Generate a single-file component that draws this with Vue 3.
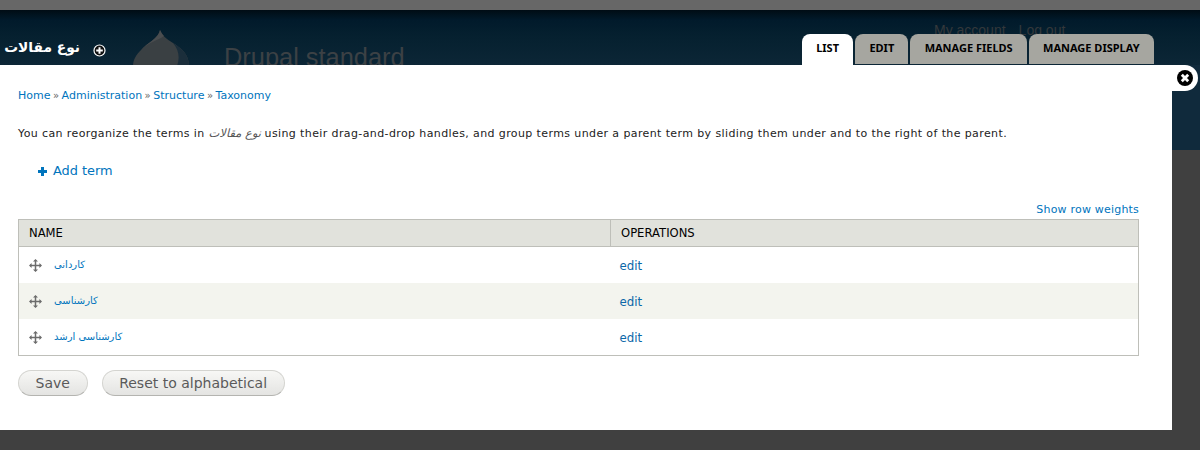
<template>
  <div class="page">
    <div class="top-strip"></div>

    <header class="head">
      <h1 class="title" dir="rtl">نوع مقالات</h1>
      <svg class="shortcut" width="13" height="13" viewBox="0 0 13 13">
        <circle cx="6.5" cy="6.5" r="5.5" fill="#111" stroke="#fff" stroke-width="1.2" />
        <path d="M6.5 3.2v6.6M3.2 6.5h6.6" stroke="#fff" stroke-width="2" />
      </svg>
      <svg class="drop" width="58" height="36" viewBox="0 0 58 36">
        <path d="M27 0C26 8 14 13 8 20C3 25 0 30 0 36H56C56 24 48 18 40 13C34 9 29 6 27 0Z" fill="#3a4043" />
        <path d="M27 0C26 8 14 13 8 20C16 12 26 10 31 6C29 4 28 2 27 0Z" fill="#4a4d4f" />
        <path d="M40 13C48 18 56 24 56 36H44C47 28 46 20 40 13Z" fill="#1b2e3b" />
      </svg>
      <span class="site-name">Drupal standard</span>
      <nav class="account">
        <span>My account</span>
        <span>Log out</span>
      </nav>
      <ul class="tabs">
        <li v-for="tab in tabs" :key="tab" class="tab" :class="{ active: tab === 'LIST' }">{{ tab }}</li>
      </ul>
    </header>

    <div class="overlay-row">
      <main class="sheet">
        <div class="breadcrumb">
          <template v-for="(crumb, i) in crumbs" :key="crumb">
            <a>{{ crumb }}</a><span v-if="i < crumbs.length - 1" class="sep">»</span>
          </template>
        </div>

        <p class="help">
          You can reorganize the terms in <em>نوع مقالات</em> using their drag-and-drop handles, and group terms under a parent term by sliding them under and to the right of the parent.
        </p>

        <div class="add-term">
          <svg width="9" height="9" viewBox="0 0 9 9">
            <path d="M4.5 0v9M0 4.5h9" stroke="#0074bd" stroke-width="3" />
          </svg>
          <a>Add term</a>
        </div>

        <div class="weights"><a>Show row weights</a></div>

        <table class="terms">
          <thead>
            <tr>
              <th class="col-name">NAME</th>
              <th>OPERATIONS</th>
            </tr>
          </thead>
          <tbody>
            <tr v-for="term in terms" :key="term">
              <td class="col-name">
                <div class="term-cell">
                  <svg class="handle" width="13" height="13" viewBox="0 0 13 13">
                    <path d="M6.5 1v11M1 6.5h11" stroke="#6c6c6c" stroke-width="1.5" />
                    <path d="M6.5 0L9 2.6H4ZM6.5 13L9 10.4H4ZM0 6.5L2.6 4V9ZM13 6.5L10.4 4V9Z" fill="#6c6c6c" />
                  </svg>
                  <a class="term-name" dir="rtl">{{ term }}</a>
                </div>
              </td>
              <td><a class="edit">edit</a></td>
            </tr>
          </tbody>
        </table>

        <div class="actions">
          <button type="button">Save</button>
          <button type="button">Reset to alphabetical</button>
        </div>
      </main>

      <div class="close-wrap">
        <div class="close-tab">
          <svg width="16" height="16" viewBox="0 0 16 16">
            <circle cx="8" cy="8" r="8" fill="#000" />
            <path d="M4.8 4.8l6.4 6.4M11.2 4.8l-6.4 6.4" stroke="#fff" stroke-width="2.8" />
          </svg>
        </div>
      </div>
    </div>
  </div>
</template>

<script setup>
const tabs = ['LIST', 'EDIT', 'MANAGE FIELDS', 'MANAGE DISPLAY'];
const crumbs = ['Home', 'Administration', 'Structure', 'Taxonomy'];
const terms = ['کاردانی', 'کارشناسی', 'کارشناسی ارشد'];
</script>

<style>
html,
body {
  margin: 0;
  background: #404040;
}
</style>

<style scoped>
.page {
  width: 1200px;
  height: 450px;
  overflow: hidden;
  font-family: "DejaVu Sans", sans-serif;
  background: linear-gradient(#102a3c, #102a3c) no-repeat 0 65px / 100% 85px, #404040;
}

.top-strip {
  height: 10px;
  background: #676767;
}

.head {
  position: relative;
  height: 55px;
  display: flex;
  align-items: flex-start;
  overflow: hidden;
  background: linear-gradient(#000c14 0, #011a2b 10px, #05202f 25px, #0c2636 55px);
}

.title {
  flex: none;
  margin: 27px 0 0 5px;
  width: 75px;
  font-size: 13.8px;
  line-height: 20px;
  font-weight: bold;
  color: #fff;
  white-space: nowrap;
}

.shortcut {
  flex: none;
  margin: 34px 0 0 13px;
}

.drop {
  flex: none;
  margin: 20px 0 0 27px;
}

.site-name {
  margin: 33px 0 0 33px;
  font-family: "Liberation Sans", sans-serif;
  font-size: 25.4px;
  line-height: 28px;
  color: #3c4145;
  white-space: nowrap;
}

.account {
  position: absolute;
  left: 934px;
  top: 12px;
  display: flex;
  gap: 13px;
  font-family: "Liberation Sans", sans-serif;
  font-size: 14px;
  line-height: 16px;
  color: #34383b;
}

.tabs {
  position: absolute;
  left: 802px;
  top: 24px;
  display: flex;
  gap: 2px;
  margin: 0;
  padding: 0;
  list-style: none;
}

.tab {
  height: 30px;
  padding: 0 14.2px;
  border-radius: 8px 8px 0 0;
  background: #a6a6a0;
  color: #000;
  font-family: "Noto Sans", sans-serif;
  font-size: 11px;
  line-height: 28px;
  font-weight: bold;
  white-space: nowrap;
}

.tab.active {
  height: 31px;
  background: #fff;
}

.overlay-row {
  display: flex;
  align-items: flex-start;
}

.sheet {
  box-sizing: border-box;
  width: 1172px;
  height: 365px;
  padding: 24px 33px 0 18px;
  background: #fff;
  font-size: 11px;
  color: #222;
}

a {
  color: #0074bd;
}

.breadcrumb {
  line-height: 13px;
}

.sep {
  margin: 0 2.5px;
  color: #666;
  font-size: 10px;
}

.help {
  margin: 23px 0 0;
  line-height: 16px;
  letter-spacing: 0.39px;
  white-space: nowrap;
}

.help em {
  color: #555;
  font-size: 11.5px;
  letter-spacing: 0;
}

.add-term {
  display: flex;
  align-items: center;
  gap: 6px;
  margin: 21px 0 0 20px;
  font-size: 12.9px;
  line-height: 16px;
}

.weights {
  margin-top: 24px;
  text-align: right;
  line-height: 14px;
  letter-spacing: 0.2px;
}

.terms {
  width: 1121px;
  margin-top: 2px;
  border-collapse: collapse;
  table-layout: fixed;
  border: 1px solid #bebfb9;
}

.terms th {
  height: 26px;
  padding: 0 10px;
  background: #e1e2dc;
  border-bottom: 1px solid #bebfb9;
  font-size: 11.6px;
  font-weight: normal;
  text-align: left;
  color: #000;
}

.terms th.col-name {
  width: 571px;
  border-right: 1px solid #bebfb9;
}

.terms td {
  height: 36px;
  padding: 0 9px;
}

.terms tbody tr:nth-child(even) {
  background: #f3f4ee;
}

.term-cell {
  display: flex;
  align-items: center;
  gap: 12px;
  padding-left: 1px;
}

.handle {
  flex: none;
}

.term-name {
  font-size: 10px;
  line-height: 14px;
  margin-top: -1px;
}

.edit {
  display: block;
  margin-top: 2px;
  font-size: 11.8px;
  line-height: 14px;
  color: #0b67a8;
}

.actions {
  display: flex;
  gap: 14px;
  margin-top: 14px;
}

.actions button {
  box-sizing: border-box;
  height: 26px;
  padding: 0 16.6px;
  border: 1px solid #d4d4d0;
  border-bottom-color: #b4b4b0;
  border-radius: 13px;
  background: linear-gradient(#f7f7f5, #e4e4e2);
  font-family: "DejaVu Sans", sans-serif;
  font-size: 14px;
  color: #5a5a5a;
}

.close-wrap {
  flex: none;
}

.close-tab {
  width: 26px;
  height: 26px;
  display: flex;
  align-items: center;
  justify-content: center;
  background: #fff;
  border-radius: 0 13px 13px 0;
}
</style>
